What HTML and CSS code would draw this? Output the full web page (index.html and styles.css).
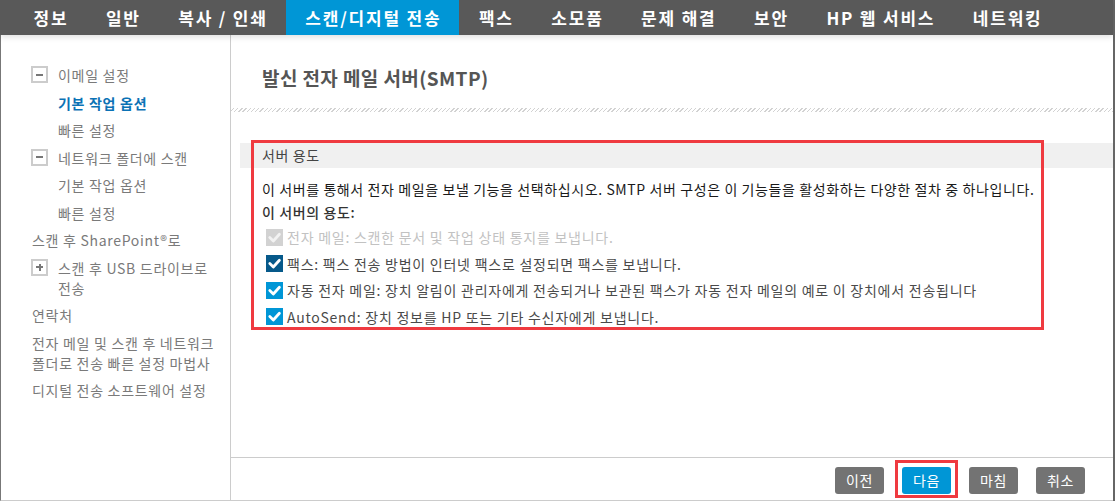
FILE: index.html
```html
<!doctype html>
<html>
  <head>
    <meta charset="utf-8">
    <title>발신 전자 메일 서버(SMTP)</title>
    <link rel="stylesheet" href="styles.css">
  </head>
  <body>
    <div class="page">
      <div class="nav">
        <a class="tab" href="#">정보</a>
        <a class="tab" href="#">일반</a>
        <a class="tab" href="#">복사 / 인쇄</a>
        <a class="tab active" href="#">스캔/디지털 전송</a>
        <a class="tab" href="#">팩스</a>
        <a class="tab" href="#">소모품</a>
        <a class="tab" href="#">문제 해결</a>
        <a class="tab" href="#">보안</a>
        <a class="tab" href="#">HP 웹 서비스</a>
        <a class="tab" href="#">네트워킹</a>
      </div>
      <div class="body">
        <ul class="tree">
          <li class="node"><span class="toggle minus"></span><span>이메일 설정</span></li>
          <li class="child current">기본 작업 옵션</li>
          <li class="child">빠른 설정</li>
          <li class="node"><span class="toggle minus"></span><span>네트워크 폴더에 스캔</span></li>
          <li class="child">기본 작업 옵션</li>
          <li class="child">빠른 설정</li>
          <li class="leaf">스캔 후 SharePoint®로</li>
          <li class="node"><span class="toggle plus"></span><span>스캔 후 USB 드라이브로<br>전송</span></li>
          <li class="leaf">연락처</li>
          <li class="leaf">전자 메일 및 스캔 후 네트워크<br>폴더로 전송 빠른 설정 마법사</li>
          <li class="leaf">디지털 전송 소프트웨어 설정</li>
        </ul>
        <div class="main">
          <div class="content">
            <h1 class="title">발신 전자 메일 서버(SMTP)</h1>
            <div class="hatch"></div>
            <div class="band">서버 용도</div>
            <p class="desc">이 서버를 통해서 전자 메일을 보낼 기능을 선택하십시오. SMTP 서버 구성은 이 기능들을 활성화하는 다양한 절차 중 하나입니다.</p>
            <p class="desc strong">이 서버의 용도:</p>
            <ul class="checks">
              <li class="check disabled">
                <span class="box"><svg viewBox="0 0 17 17"><path d="M3.8 8.6 L7.3 12 L13.4 5.2" /></svg></span>
                전자 메일: 스캔한 문서 및 작업 상태 통지를 보냅니다.
              </li>
              <li class="check focus">
                <span class="box"><svg viewBox="0 0 17 17"><path d="M3.8 8.6 L7.3 12 L13.4 5.2" /></svg></span>
                팩스: 팩스 전송 방법이 인터넷 팩스로 설정되면 팩스를 보냅니다.
              </li>
              <li class="check">
                <span class="box"><svg viewBox="0 0 17 17"><path d="M3.8 8.6 L7.3 12 L13.4 5.2" /></svg></span>
                자동 전자 메일: 장치 알림이 관리자에게 전송되거나 보관된 팩스가 자동 전자 메일의 예로 이 장치에서 전송됩니다
              </li>
              <li class="check">
                <span class="box"><svg viewBox="0 0 17 17"><path d="M3.8 8.6 L7.3 12 L13.4 5.2" /></svg></span>
                AutoSend: 장치 정보를 HP 또는 기타 수신자에게 보냅니다.
              </li>
            </ul>
            <div class="mark mark-section"></div>
          </div>
          <div class="footer">
            <span class="btn">이전</span>
            <span class="btn primary">다음<span class="mark mark-btn"></span></span>
            <span class="btn">마침</span>
            <span class="btn">취소</span>
          </div>
        </div>
      </div>
    </div>
  </body>
</html>
```

FILE: styles.css
```css
body {
  margin:             0;
  background-color:   #fff;
  font-family:        "Noto Sans CJK KR", "Noto Sans", sans-serif;
  font-size:          14px;
}
ul, p, h1 {
  margin:             0;
  padding:            0;
}
.page {
  width:              1113px;
  height:             501px;
  border-right:       2px solid #666;
  display:            flex;
  flex-direction:     column;
}

/* top tabs */
.nav {
  height:             35px;
  flex:               none;
  display:            flex;
  padding-left:       14px;
  background-color:   #595959;
  box-shadow:         0 2px 6px rgba(0, 0, 0, 0.13);
  position:           relative;
  z-index:            2;
}
.tab {
  padding:            0 18px 0 19.5px;
  line-height:        35px;
  color:              #fff;
  font-size:          17px;
  font-weight:        bold;
  letter-spacing:     1.8px;
  text-decoration:    none;
  white-space:        nowrap;
}
.tab.active {
  background-color:   #0096d6;
}

.body {
  flex:               1;
  display:            flex;
  border-left:        1px solid #777;
  border-bottom:      1px solid #ccc;
  min-height:         0;
}

/* left tree */
.tree {
  width:              229px;
  flex:               none;
  border-right:       1px solid #ccc;
  list-style:         none;
  padding-top:        30px;
  color:              #7a7a7a;
  line-height:        20px;
  letter-spacing:     0.7px;
}
.tree li {
  margin-bottom:      7.5px;
  white-space:        nowrap;
}
.node {
  display:            flex;
  align-items:        flex-start;
  padding-left:       30px;
}
.child {
  padding-left:       57px;
}
.leaf {
  padding-left:       31px;
}
.current {
  color:              #0b72b5;
  font-weight:        bold;
}
.toggle {
  width:              13px;
  height:             13px;
  border:             2px solid #ccc;
  margin:             1px 10px 0 0;
  position:           relative;
  flex:               none;
}
.toggle::before,
.toggle::after {
  content:            '';
  position:           absolute;
  background-color:   #777;
}
.toggle::before {
  left:               3px;
  right:              3px;
  top:                5.5px;
  height:             2px;
}
.plus::after {
  top:                3px;
  bottom:             3px;
  left:               5.5px;
  width:              2px;
}

/* main panel */
.main {
  flex:               1;
  display:            flex;
  flex-direction:     column;
  min-width:          0;
}
.content {
  flex:               1;
  position:           relative;
  letter-spacing:     0.6px;
}
.title {
  padding:            30px 0 0 31px;
  font-size:          19px;
  line-height:        26px;
  font-weight:        bold;
  color:              #555;
  letter-spacing:     0.4px;
}
.hatch {
  height:             4px;
  margin-top:         17px;
  background:         repeating-linear-gradient(-45deg, #d2d2d2 0 1px, #fff 1px 3px);
}
.band {
  margin:             31px 0 0 9px;
  height:             25px;
  line-height:        25px;
  padding-left:       22px;
  background-color:   #f0f0f0;
  color:              #444;
}
.desc {
  padding-left:       31px;
  line-height:        23px;
  color:              #1a1a1a;
}
.band + .desc {
  margin-top:         10px;
}
.desc.strong {
  font-weight:        500;
  color:              #333;
}
.checks {
  list-style:         none;
  padding-left:       35px;
}
.check {
  height:             26.5px;
  display:            flex;
  align-items:        center;
  gap:                4px;
  color:              #4a4a4a;
  white-space:        nowrap;
  letter-spacing:     0.75px;
}
.box {
  width:              17px;
  height:             17px;
  flex:               none;
  background-color:   #0096d6;
  display:            block;
}
.box svg {
  display:            block;
  width:              17px;
  height:             17px;
}
.box path {
  fill:               none;
  stroke:             #fff;
  stroke-width:       2.8;
  stroke-linecap:     round;
  stroke-linejoin:    round;
}
.focus .box {
  background-color:   #06598a;
}
.disabled {
  color:              #c2c2c2;
}
.disabled .box {
  background-color:   #d2d2d2;
}
.disabled .box path {
  stroke:             #f2f2f2;
}

/* annotation frames */
.mark {
  position:           absolute;
  border:             3px solid #ef3a40;
  pointer-events:     none;
}
.mark-section {
  left:               20px;
  top:                105px;
  width:              787px;
  height:             184px;
}
.mark-btn {
  left:               -7px;
  right:              -7px;
  top:                -7px;
  bottom:             -4px;
}

/* footer buttons */
.footer {
  flex:               none;
  height:             43px;
  border-top:         1px solid #ccc;
  display:            flex;
  justify-content:    flex-end;
  align-items:        flex-start;
  gap:                18px;
  padding:            9px 28px 0 0;
  box-sizing:         border-box;
}
.btn {
  position:           relative;
  width:              49px;
  height:             27px;
  line-height:        27px;
  text-align:         center;
  border-radius:      3px;
  background-color:   #737373;
  color:              #fff;
  font-size:          14px;
  letter-spacing:     0.5px;
}
.btn.primary {
  background-color:   #0096d6;
}
```
